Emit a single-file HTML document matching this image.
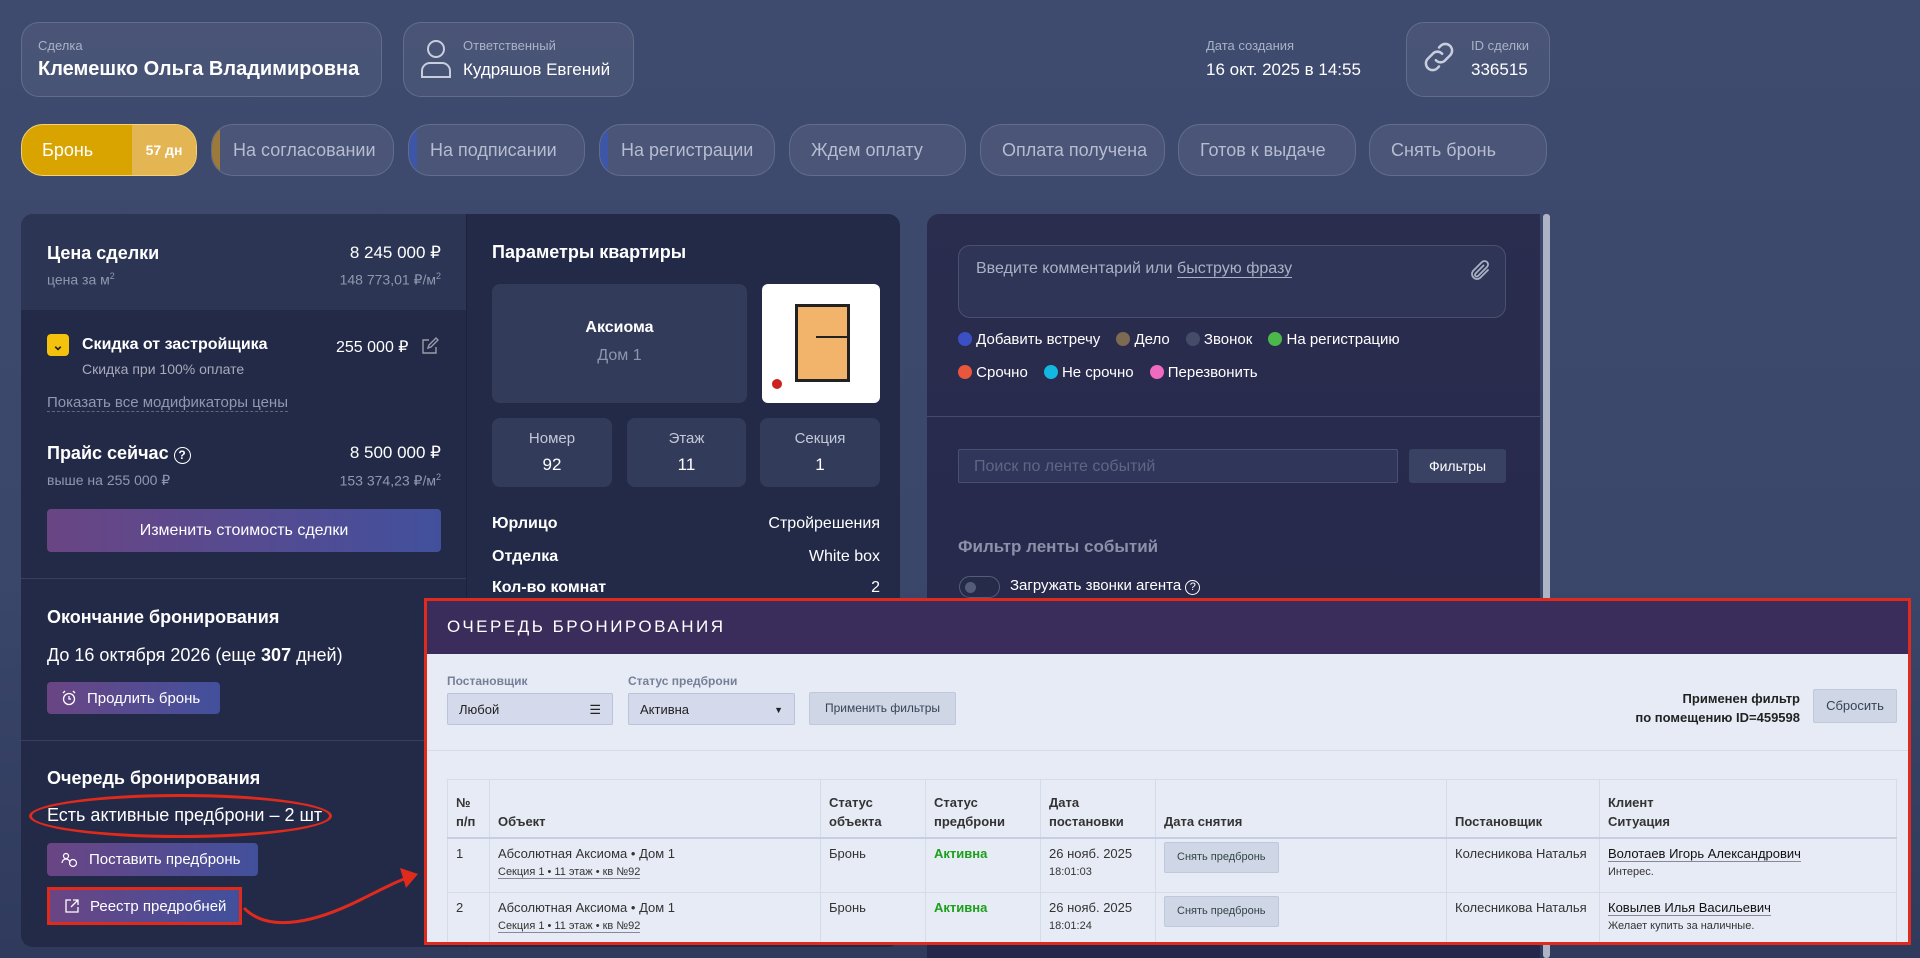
<!DOCTYPE html>
<html><head><meta charset="utf-8"><style>
*{box-sizing:border-box;margin:0;padding:0}
body{width:1920px;height:958px;overflow:hidden;position:relative;font-family:"Liberation Sans",sans-serif;color:#fff;background:linear-gradient(180deg,#3e4a6e 0%,#3a466a 60%,#2f3a5c 100%)}
.a{position:absolute}
.card{position:absolute;border:1px solid rgba(255,255,255,.15);background:rgba(255,255,255,.06);border-radius:18px}
.lbl{font-size:13px;color:#aab2c8}
.pill{position:absolute;top:124px;height:52px;border-radius:22px;border:1px solid rgba(255,255,255,.14);background:rgba(255,255,255,.07);color:#b6bdd0;font-size:18px;line-height:50px;padding-left:21px;overflow:hidden}
.pill i{position:absolute;left:0;top:0;bottom:0;width:8px}
.h{font-weight:bold;font-size:18px}
.btn{position:absolute;border-radius:4px;background:linear-gradient(90deg,#6a4584,#42509c);color:#fff;font-size:16px;display:flex;align-items:center;padding-left:14px;gap:10px}
.sm{position:absolute;background:#323c5a;border-radius:8px;text-align:center;font-size:15px;color:#c3c9d8}
.m{color:#222;font-size:13px}
table{border-collapse:collapse;width:1450px}
td,th{border:1px solid #d5dbe8;vertical-align:top;text-align:left;padding:6px 8px;font-size:13px;color:#333}
th{font-weight:bold;vertical-align:bottom;height:58px;border-bottom:2px solid #c5cee2;line-height:19px}
td{height:55px;line-height:17px}
.sb{display:inline-block;background:#cfd6e6;border:1px solid #c0c8db;border-radius:2px;padding:6px 12px;font-size:11px;color:#344}
.u{border-bottom:1px solid #889}
</style></head><body>
<!-- header cards -->
<div class="card" style="left:21px;top:22px;width:361px;height:75px"></div>
<div class="a lbl" style="left:38px;top:38px">Сделка</div>
<div class="a" style="left:38px;top:58px;font-size:20px;font-weight:bold">Клемешко Ольга Владимировна</div>
<div class="card" style="left:403px;top:22px;width:231px;height:75px"></div>
<svg class="a" style="left:418px;top:37px" width="36" height="44" viewBox="0 0 36 44" fill="none" stroke="#c8cedd" stroke-width="2"><circle cx="18" cy="12" r="8"/><path d="M4 40 V34 a8 8 0 0 1 8-8 h12 a8 8 0 0 1 8 8 v6 z"/></svg>
<div class="a lbl" style="left:463px;top:38px">Ответственный</div>
<div class="a" style="left:463px;top:60px;font-size:17px">Кудряшов Евгений</div>
<div class="a lbl" style="left:1206px;top:38px">Дата создания</div>
<div class="a" style="left:1206px;top:60px;font-size:17px">16 окт. 2025 в 14:55</div>
<div class="card" style="left:1406px;top:22px;width:144px;height:75px"></div>
<svg class="a" style="left:1420px;top:38px" width="38" height="38" viewBox="0 0 24 24" fill="none" stroke="#c8cedd" stroke-width="1.6" stroke-linecap="round"><path d="M10 14a4 4 0 0 0 6 0l3-3a4 4 0 0 0-6-6l-1 1"/><path d="M14 10a4 4 0 0 0-6 0l-3 3a4 4 0 0 0 6 6l1-1"/></svg>
<div class="a lbl" style="left:1471px;top:38px">ID сделки</div>
<div class="a" style="left:1471px;top:60px;font-size:17px">336515</div>
<!-- pills -->
<div class="pill" style="left:21px;width:176px;background:#d9a300;border-color:#f2d37a;color:#fff;padding-left:20px">Бронь<span class="a" style="left:110px;top:0;bottom:0;right:0;background:#e3b553;font-size:14px;font-weight:bold;text-align:center;padding-left:0">57 дн</span></div>
<div class="pill" style="left:211px;width:183px"><i style="background:#9c7a3c"></i>На согласовании</div>
<div class="pill" style="left:408px;width:177px"><i style="background:#3e56a8"></i>На подписании</div>
<div class="pill" style="left:599px;width:176px"><i style="background:#3e56a8"></i>На регистрации</div>
<div class="pill" style="left:789px;width:177px">Ждем оплату</div>
<div class="pill" style="left:980px;width:185px">Оплата получена</div>
<div class="pill" style="left:1178px;width:178px">Готов к выдаче</div>
<div class="pill" style="left:1369px;width:178px">Снять бронь</div>
<!-- left panel -->
<div class="a" style="left:21px;top:214px;width:879px;height:733px;background:#232a47;border-radius:12px;overflow:hidden">
 <div class="a" style="left:0;top:0;width:445px;height:96px;background:#2d3554"></div>
 <div class="a" style="left:445px;top:0;width:1px;height:733px;background:#1c223b"></div>
 <div class="a" style="left:0;top:364px;width:445px;height:1px;background:#38405e"></div>
 <div class="a" style="left:0;top:526px;width:445px;height:1px;background:#38405e"></div>
</div>
<div class="a h" style="left:47px;top:243px">Цена сделки</div>
<div class="a" style="right:1479px;top:243px;font-size:17px">8 245 000 ₽</div>
<div class="a" style="left:47px;top:271px;font-size:14px;color:#9098b0">цена за м<sup style="font-size:9px">2</sup></div>
<div class="a" style="right:1479px;top:271px;font-size:14px;color:#9098b0">148 773,01 ₽/м<sup style="font-size:9px">2</sup></div>
<div class="a" style="left:47px;top:334px;width:22px;height:22px;background:#f4c20d;border-radius:4px;color:#222;font-size:14px;font-weight:bold;text-align:center;line-height:22px">⌄</div>
<div class="a" style="left:82px;top:336px;font-size:16px;font-weight:bold">Скидка от застройщика</div>
<div class="a" style="left:82px;top:361px;font-size:14px;color:#aab">Скидка при 100% оплате</div>
<div class="a" style="left:336px;top:337px;font-size:16px">255 000 ₽</div>
<svg class="a" style="left:420px;top:336px" width="20" height="20" viewBox="0 0 20 20" fill="none" stroke="#99a" stroke-width="1.4"><path d="M16 11v6H3V4h6"/><path d="M8 12l1-3 7-7 2 2-7 7z"/></svg>
<div class="a" style="left:47px;top:394px;font-size:15px;color:#9098b0;border-bottom:1px dashed #667">Показать все модификаторы цены</div>
<div class="a h" style="left:47px;top:443px">Прайс сейчас <span style="display:inline-block;width:17px;height:17px;border:1.5px solid #fff;border-radius:50%;font-size:12px;text-align:center;line-height:15px">?</span></div>
<div class="a" style="right:1479px;top:443px;font-size:17px">8 500 000 ₽</div>
<div class="a" style="left:47px;top:472px;font-size:14px;color:#9098b0">выше на 255 000 ₽</div>
<div class="a" style="right:1479px;top:472px;font-size:14px;color:#9098b0">153 374,23 ₽/м<sup style="font-size:9px">2</sup></div>
<div class="btn" style="left:47px;top:509px;width:394px;height:43px;justify-content:center;padding:0">Изменить стоимость сделки</div>
<div class="a h" style="left:47px;top:607px">Окончание бронирования</div>
<div class="a" style="left:47px;top:645px;font-size:18px">До 16 октября 2026 (еще <b>307</b> дней)</div>
<div class="btn" style="left:47px;top:682px;width:173px;height:32px;font-size:15px"><svg width="16" height="16" viewBox="0 0 16 16" fill="none" stroke="#fff" stroke-width="1.3"><circle cx="8" cy="9" r="5.5"/><path d="M8 6v3h2M2 3l2-2M14 3l-2-2"/></svg>Продлить бронь</div>
<div class="a h" style="left:47px;top:768px">Очередь бронирования</div>
<div class="a" style="left:47px;top:805px;font-size:18px">Есть активные предброни – 2 шт</div>
<div class="a" style="left:29px;top:794px;width:303px;height:44px;border:3px solid #e02a1c;border-radius:50%"></div>
<div class="btn" style="left:47px;top:843px;width:211px;height:33px;font-size:15px"><svg width="18" height="16" viewBox="0 0 18 16" fill="none" stroke="#fff" stroke-width="1.2"><circle cx="5" cy="4" r="2.5"/><path d="M1 11a4 4 0 0 1 8 0"/><circle cx="12" cy="11" r="3.5"/></svg>Поставить предбронь</div>
<div class="btn" style="left:47px;top:887px;width:195px;height:38px;font-size:15px;border:3px solid #e02a1c;border-radius:0"><svg width="16" height="16" viewBox="0 0 16 16" fill="none" stroke="#fff" stroke-width="1.3"><path d="M7 2H2v12h12V9M9 2h5v5M14 2L7 9"/></svg>Реестр предробней</div>
<svg class="a" style="left:240px;top:860px" width="190" height="70" viewBox="0 0 190 70" fill="none"><path d="M4 48 C30 75 80 60 120 40 C150 25 160 20 170 17" stroke="#e02a1c" stroke-width="3"/><path d="M160 8 L178 14 L166 28 Z" fill="#e02a1c"/></svg>
<!-- middle -->
<div class="a h" style="left:492px;top:242px">Параметры квартиры</div>
<div class="sm" style="left:492px;top:284px;width:255px;height:119px"><div style="margin-top:35px;font-weight:bold;color:#fff;font-size:16px">Аксиома</div><div style="margin-top:10px;color:#8e96ad;font-size:16px">Дом 1</div></div>
<div class="a" style="left:762px;top:284px;width:118px;height:119px;background:#fff;border-radius:6px">
 <div class="a" style="left:33px;top:20px;width:55px;height:78px;background:#f2b36a;border:3px solid #222"></div>
 <div class="a" style="left:54px;top:52px;width:34px;height:2px;background:#222"></div>
 <div class="a" style="left:10px;top:95px;width:10px;height:10px;background:#c22;border-radius:50%"></div>
</div>
<div class="sm" style="left:492px;top:418px;width:120px;height:69px"><div style="margin-top:12px">Номер</div><div style="margin-top:8px;color:#fff;font-size:17px">92</div></div>
<div class="sm" style="left:627px;top:418px;width:119px;height:69px"><div style="margin-top:12px">Этаж</div><div style="margin-top:8px;color:#fff;font-size:17px">11</div></div>
<div class="sm" style="left:760px;top:418px;width:120px;height:69px"><div style="margin-top:12px">Секция</div><div style="margin-top:8px;color:#fff;font-size:17px">1</div></div>
<div class="a" style="left:492px;top:515px;font-size:16px;font-weight:bold">Юрлицо</div><div class="a" style="right:1040px;top:515px;font-size:16px">Стройрешения</div>
<div class="a" style="left:492px;top:548px;font-size:16px;font-weight:bold">Отделка</div><div class="a" style="right:1040px;top:548px;font-size:16px">White box</div>
<div class="a" style="left:492px;top:579px;font-size:16px;font-weight:bold">Кол-во комнат</div><div class="a" style="right:1040px;top:579px;font-size:16px">2</div>
<!-- right panel -->
<div class="a" style="left:927px;top:214px;width:613px;height:744px;background:linear-gradient(180deg,#2b2d4f,#24264a);border-radius:12px 0 0 0"></div>
<div class="a" style="left:1543px;top:214px;width:7px;height:744px;background:#aeb3c6;border-radius:3px"></div>
<div class="a" style="left:958px;top:245px;width:548px;height:73px;border:1px solid #4a5070;border-radius:12px;background:#2f3556"></div>
<div class="a" style="left:976px;top:260px;font-size:16px;color:#aab1c4">Введите комментарий или <span style="border-bottom:1px solid #aab1c4">быструю фразу</span></div>
<svg class="a" style="left:1468px;top:258px" width="24" height="26" viewBox="0 0 24 24" fill="none" stroke="#aab1c4" stroke-width="1.8" stroke-linecap="round"><path d="M20 11l-8 8a5 5 0 0 1-7-7l9-9a3.3 3.3 0 0 1 5 5l-9 9a1.7 1.7 0 0 1-2.5-2.5l8-8"/></svg>
<div class="a" style="left:958px;top:331px;font-size:15px;display:flex;gap:16px;align-items:center">
<span><b style="display:inline-block;width:14px;height:14px;border-radius:50%;background:#3b50c4;vertical-align:-2px"></b> Добавить встречу</span>
<span><b style="display:inline-block;width:14px;height:14px;border-radius:50%;background:#7c6b52;vertical-align:-2px"></b> Дело</span>
<span><b style="display:inline-block;width:14px;height:14px;border-radius:50%;background:#454c6a;vertical-align:-2px"></b> Звонок</span>
<span><b style="display:inline-block;width:14px;height:14px;border-radius:50%;background:#4cb84c;vertical-align:-2px"></b> На регистрацию</span></div>
<div class="a" style="left:958px;top:364px;font-size:15px;display:flex;gap:16px;align-items:center">
<span><b style="display:inline-block;width:14px;height:14px;border-radius:50%;background:#e8563e;vertical-align:-2px"></b> Срочно</span>
<span><b style="display:inline-block;width:14px;height:14px;border-radius:50%;background:#12b8e0;vertical-align:-2px"></b> Не срочно</span>
<span><b style="display:inline-block;width:14px;height:14px;border-radius:50%;background:#f06ac0;vertical-align:-2px"></b> Перезвонить</span></div>
<div class="a" style="left:927px;top:416px;width:613px;height:1px;background:#464b6a"></div>
<div class="a" style="left:958px;top:449px;width:440px;height:34px;border:1px solid #4a5070;background:#30365a;border-radius:2px;color:#5f6684;font-size:16px;padding:8px 15px">Поиск по ленте событий</div>
<div class="a" style="left:1409px;top:449px;width:97px;height:34px;background:#3a4264;border-radius:3px;font-size:14px;text-align:center;line-height:34px">Фильтры</div>
<div class="a" style="left:958px;top:537px;font-size:17px;font-weight:bold;color:#8c91a8">Фильтр ленты событий</div>
<div class="a" style="left:959px;top:576px;width:41px;height:22px;border:1px solid #555c7a;border-radius:11px;background:#262b4a"><div style="margin:5px;width:11px;height:11px;border-radius:50%;background:#555c7a"></div></div>
<div class="a" style="left:1010px;top:577px;font-size:15px">Загружать звонки агента <span style="display:inline-block;width:15px;height:15px;border:1.3px solid #fff;border-radius:50%;font-size:11px;text-align:center;line-height:13px">?</span></div>
<!-- modal -->
<div class="a" style="left:424px;top:598px;width:1487px;height:347px;border:3px solid #e02a1c;background:#e7ebf5;overflow:hidden">
 <div style="height:53px;background:#3b2d5b;color:#fff;font-size:17px;letter-spacing:2.5px;padding:16px 20px">ОЧЕРЕДЬ БРОНИРОВАНИЯ</div>
 <div class="a" style="left:0;right:0;top:149px;height:1px;background:#d6dbe7"></div>
 <div class="a" style="left:20px;top:178px;width:1450px;height:163px;overflow:hidden">
<table>
<colgroup><col style="width:42px"><col style="width:331px"><col style="width:105px"><col style="width:115px"><col style="width:115px"><col style="width:291px"><col style="width:153px"><col></colgroup>
<tr><th>№<br>п/п</th><th>Объект</th><th>Статус<br>объекта</th><th>Статус<br>предброни</th><th>Дата<br>постановки</th><th>Дата снятия</th><th>Постановщик</th><th>Клиент<br>Ситуация</th></tr>
<tr><td>1</td><td>Абсолютная Аксиома • Дом 1<br><span class="u" style="font-size:11px;line-height:20px">Секция 1 • 11 этаж • кв №92</span></td><td>Бронь</td><td style="color:#1aa01a;font-weight:bold">Активна</td><td>26 нояб. 2025<br><span style="font-size:11px;line-height:20px">18:01:03</span></td><td style="padding-top:3px"><span class="sb">Снять предбронь</span></td><td>Колесникова Наталья</td><td><span class="u" style="color:#111">Волотаев Игорь Александрович</span><br><span style="font-size:11px;line-height:20px">Интерес.</span></td></tr>
<tr><td>2</td><td>Абсолютная Аксиома • Дом 1<br><span class="u" style="font-size:11px;line-height:20px">Секция 1 • 11 этаж • кв №92</span></td><td>Бронь</td><td style="color:#1aa01a;font-weight:bold">Активна</td><td>26 нояб. 2025<br><span style="font-size:11px;line-height:20px">18:01:24</span></td><td style="padding-top:3px"><span class="sb">Снять предбронь</span></td><td>Колесникова Наталья</td><td><span class="u" style="color:#111">Ковылев Илья Васильевич</span><br><span style="font-size:11px;line-height:20px">Желает купить за наличные.</span></td></tr>
</table>
 </div>
</div>
<div class="a" style="left:447px;top:674px;font-size:12px;color:#778099;font-weight:bold">Постановщик</div>
<div class="a" style="left:628px;top:674px;font-size:12px;color:#778099;font-weight:bold">Статус предброни</div>
<div class="a m" style="left:447px;top:693px;width:166px;height:32px;background:#d4daeb;border:1px solid #b9c3da;border-radius:2px;padding:8px 11px">Любой<span style="float:right">☰</span></div>
<div class="a m" style="left:628px;top:693px;width:167px;height:32px;background:#d4daeb;border:1px solid #b9c3da;border-radius:2px;padding:8px 11px">Активна<span style="float:right;font-size:9px;margin-top:3px">▼</span></div>
<div class="a m" style="left:809px;top:692px;width:147px;height:33px;background:#cfd6e6;border:1px solid #c0c8db;border-radius:2px;text-align:center;line-height:31px;font-size:12px;color:#345">Применить фильтры</div>
<div class="a m" style="right:120px;top:689px;text-align:right;font-weight:bold;line-height:19px">Применен фильтр<br>по помещению ID=459598</div>
<div class="a m" style="left:1813px;top:689px;width:84px;height:34px;background:#cfd6e6;border:1px solid #c0c8db;border-radius:2px;text-align:center;line-height:32px;color:#345">Сбросить</div>
</body></html>
